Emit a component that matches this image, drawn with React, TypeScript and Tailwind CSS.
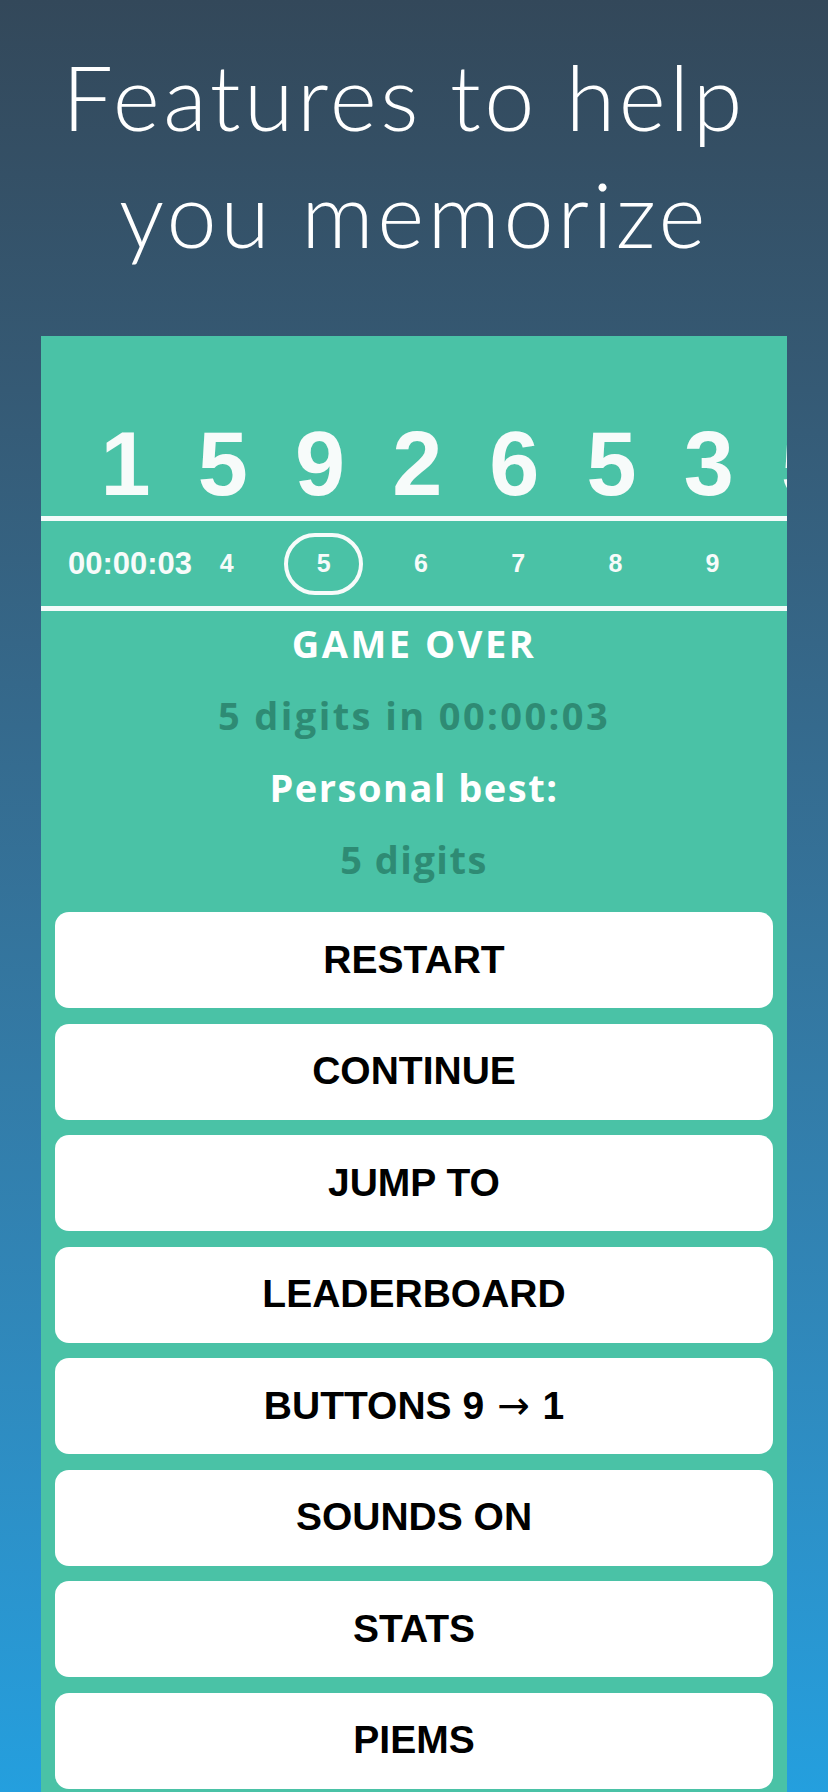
import React from "react";

const bigDigits = ["1", "5", "9", "2", "6", "5", "3", "5"];
const positions = [4, 5, 6, 7, 8, 9];
const current = 5;

const menu = [
  "RESTART",
  "CONTINUE",
  "JUMP TO",
  "LEADERBOARD",
  "BUTTONS 9 → 1",
  "SOUNDS ON",
  "STATS",
  "PIEMS",
];

function DigitStrip() {
  return (
    <div className="flex h-[180px] items-end overflow-hidden pb-[7px] pl-[36px]">
      {bigDigits.map((d, i) => (
        <span
          key={i}
          className="w-[97.2px] shrink-0 text-center text-[90px] font-bold leading-none text-[#f7fbfa]"
        >
          {d}
        </span>
      ))}
    </div>
  );
}

function PositionRow() {
  return (
    <div className="flex h-[85px] items-center overflow-hidden pl-[27px] text-[#f7fbfa]">
      <span className="w-[110px] shrink-0 whitespace-nowrap text-[31px] font-bold leading-none">
        00:00:03
      </span>
      {positions.map((p) => (
        <div key={p} className="flex w-[97.2px] shrink-0 justify-center">
          {p === current ? (
            <div className="flex h-[62px] w-[79px] items-center justify-center rounded-[31px] border-4 border-[#f7fbfa]">
              <span className="text-[25px] font-bold leading-none">{p}</span>
            </div>
          ) : (
            <span className="text-[25px] font-bold leading-none">{p}</span>
          )}
        </div>
      ))}
    </div>
  );
}

function Summary() {
  return (
    <div
      className="mt-[-4px] flex flex-col items-center text-[38px] font-bold leading-[72px]"
      style={{ fontFamily: "'Open Sans', Lato, sans-serif" }}
    >
      <span className="tracking-[2.5px] text-white">GAME OVER</span>
      <span className="tracking-[2.4px] text-[#2e8b74]">5 digits in 00:00:03</span>
      <span className="tracking-[1.5px] text-white">Personal best:</span>
      <span className="tracking-[1.5px] text-[#2e8b74]">5 digits</span>
    </div>
  );
}

function MenuLabel({ label }: { label: string }) {
  const parts = label.split("→");
  if (parts.length === 1) return <>{label}</>;
  return (
    <>
      {parts[0]}
      <span
        className="mx-[2px] font-normal"
        style={{ fontFamily: "'DejaVu Sans', sans-serif" }}
      >
        →
      </span>
      {parts[1]}
    </>
  );
}

export default function App() {
  return (
    <div
      className="flex h-[1792px] w-[828px] flex-col overflow-hidden bg-gradient-to-b from-[#33485a] to-[#249fde]"
      style={{ fontFamily: "'Liberation Sans', Arial, sans-serif" }}
    >
      <h1
        className="flex flex-col items-center pt-[38px] text-[90px] font-light leading-[117px] tracking-[3.5px] text-white"
        style={{ fontFamily: "Lato, 'Open Sans', sans-serif" }}
      >
        <span className="pr-[20px]">Features to help</span>
        <span>you memorize</span>
      </h1>

      <div className="mx-[41px] mt-[64px] flex-1 bg-[#4ac2a6]">
        <DigitStrip />
        <div className="h-[5px] bg-[#f4fbfa]" />
        <PositionRow />
        <div className="h-[5px] bg-[#f4fbfa]" />
        <Summary />

        <div className="mt-[17px] flex flex-col gap-[15.5px] px-[14px]">
          {menu.map((label) => (
            <button
              key={label}
              className="flex h-[96px] items-center justify-center whitespace-pre rounded-[14px] bg-white text-[39px] font-bold text-black"
            >
              <MenuLabel label={label} />
            </button>
          ))}
        </div>
      </div>
    </div>
  );
}
